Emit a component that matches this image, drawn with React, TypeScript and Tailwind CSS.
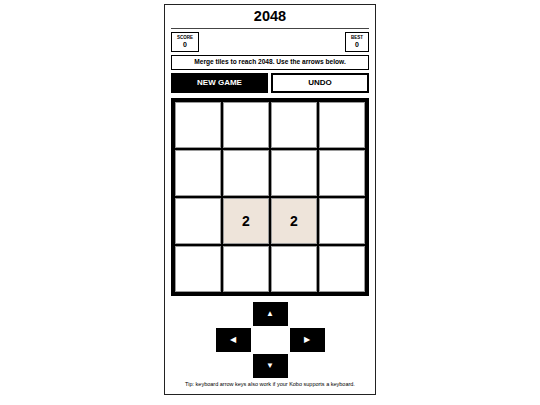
import React from "react";

const tiles: (number | null)[] = [
  null, null, null, null,
  null, null, null, null,
  null, 2, 2, null,
  null, null, null, null,
];

function Tile({ v }: { v: number | null }) {
  return (
    <div
      className={`w-[46px] h-[46px] border border-[#9a9a9a] flex items-center justify-center text-[14px] font-bold text-black ${
        v ? "bg-[#eee4da]" : "bg-white"
      }`}
    >
      {v ?? ""}
    </div>
  );
}

export default function App() {
  return (
    <div className="w-full h-[405px] bg-white" style={{ fontFamily: '"Liberation Sans", Arial, sans-serif' }}>
      <div className="mx-auto mt-[4px] w-[212px] border border-[#222] px-[6px] pb-[6px] flex flex-col text-black">
        <div className="h-[24px] border-b border-[#444] flex items-center justify-center text-[14.5px] font-bold leading-none">
          2048
        </div>
        <div className="mt-[3px] flex justify-between h-[20px]">
          <div className="w-[28px] h-[20px] border border-black flex flex-col items-center justify-center leading-none">
            <span className="text-[4.5px] font-bold">SCORE</span>
            <span className="text-[7px] font-bold mt-[1px]">0</span>
          </div>
          <div className="w-[24px] h-[20px] border border-black flex flex-col items-center justify-center leading-none">
            <span className="text-[4.5px] font-bold">BEST</span>
            <span className="text-[7px] font-bold mt-[1px]">0</span>
          </div>
        </div>
        <div className="mt-[3px] h-[15px] border border-black flex items-center justify-center text-[6.6px] font-bold leading-none">
          Merge tiles to reach 2048. Use the arrows below.
        </div>
        <div className="mt-[3px] flex gap-[3px] h-[20px]">
          <button className="w-[97px] h-[20px] bg-black text-white text-[8px] font-bold flex items-center justify-center leading-none">
            NEW GAME
          </button>
          <button className="flex-1 h-[20px] border-2 border-black bg-white text-black text-[8px] font-bold flex items-center justify-center leading-none">
            UNDO
          </button>
        </div>
        <div className="mt-[5px] border-4 border-black bg-black grid grid-cols-4 gap-[2px] w-[198px]">
          {tiles.map((v, i) => (
            <Tile key={i} v={v} />
          ))}
        </div>
        <div className="mt-[6px] mx-auto grid grid-cols-[35px_35px_35px] grid-rows-[24px_24px_24px] gap-x-[2px] gap-y-[2px]">
          <div />
          <button className="bg-black text-white text-[8px] leading-none flex items-center justify-center">▲</button>
          <div />
          <button className="bg-black text-white text-[8px] leading-none flex items-center justify-center">◀</button>
          <div />
          <button className="bg-black text-white text-[8px] leading-none flex items-center justify-center">▶</button>
          <div />
          <button className="bg-black text-white text-[8px] leading-none flex items-center justify-center">▼</button>
          <div />
        </div>
        <div className="mt-[2px] h-[8px] text-[5.5px] leading-[8px] text-center text-black">
          Tip: keyboard arrow keys also work if your Kobo supports a keyboard.
        </div>
      </div>
    </div>
  );
}
